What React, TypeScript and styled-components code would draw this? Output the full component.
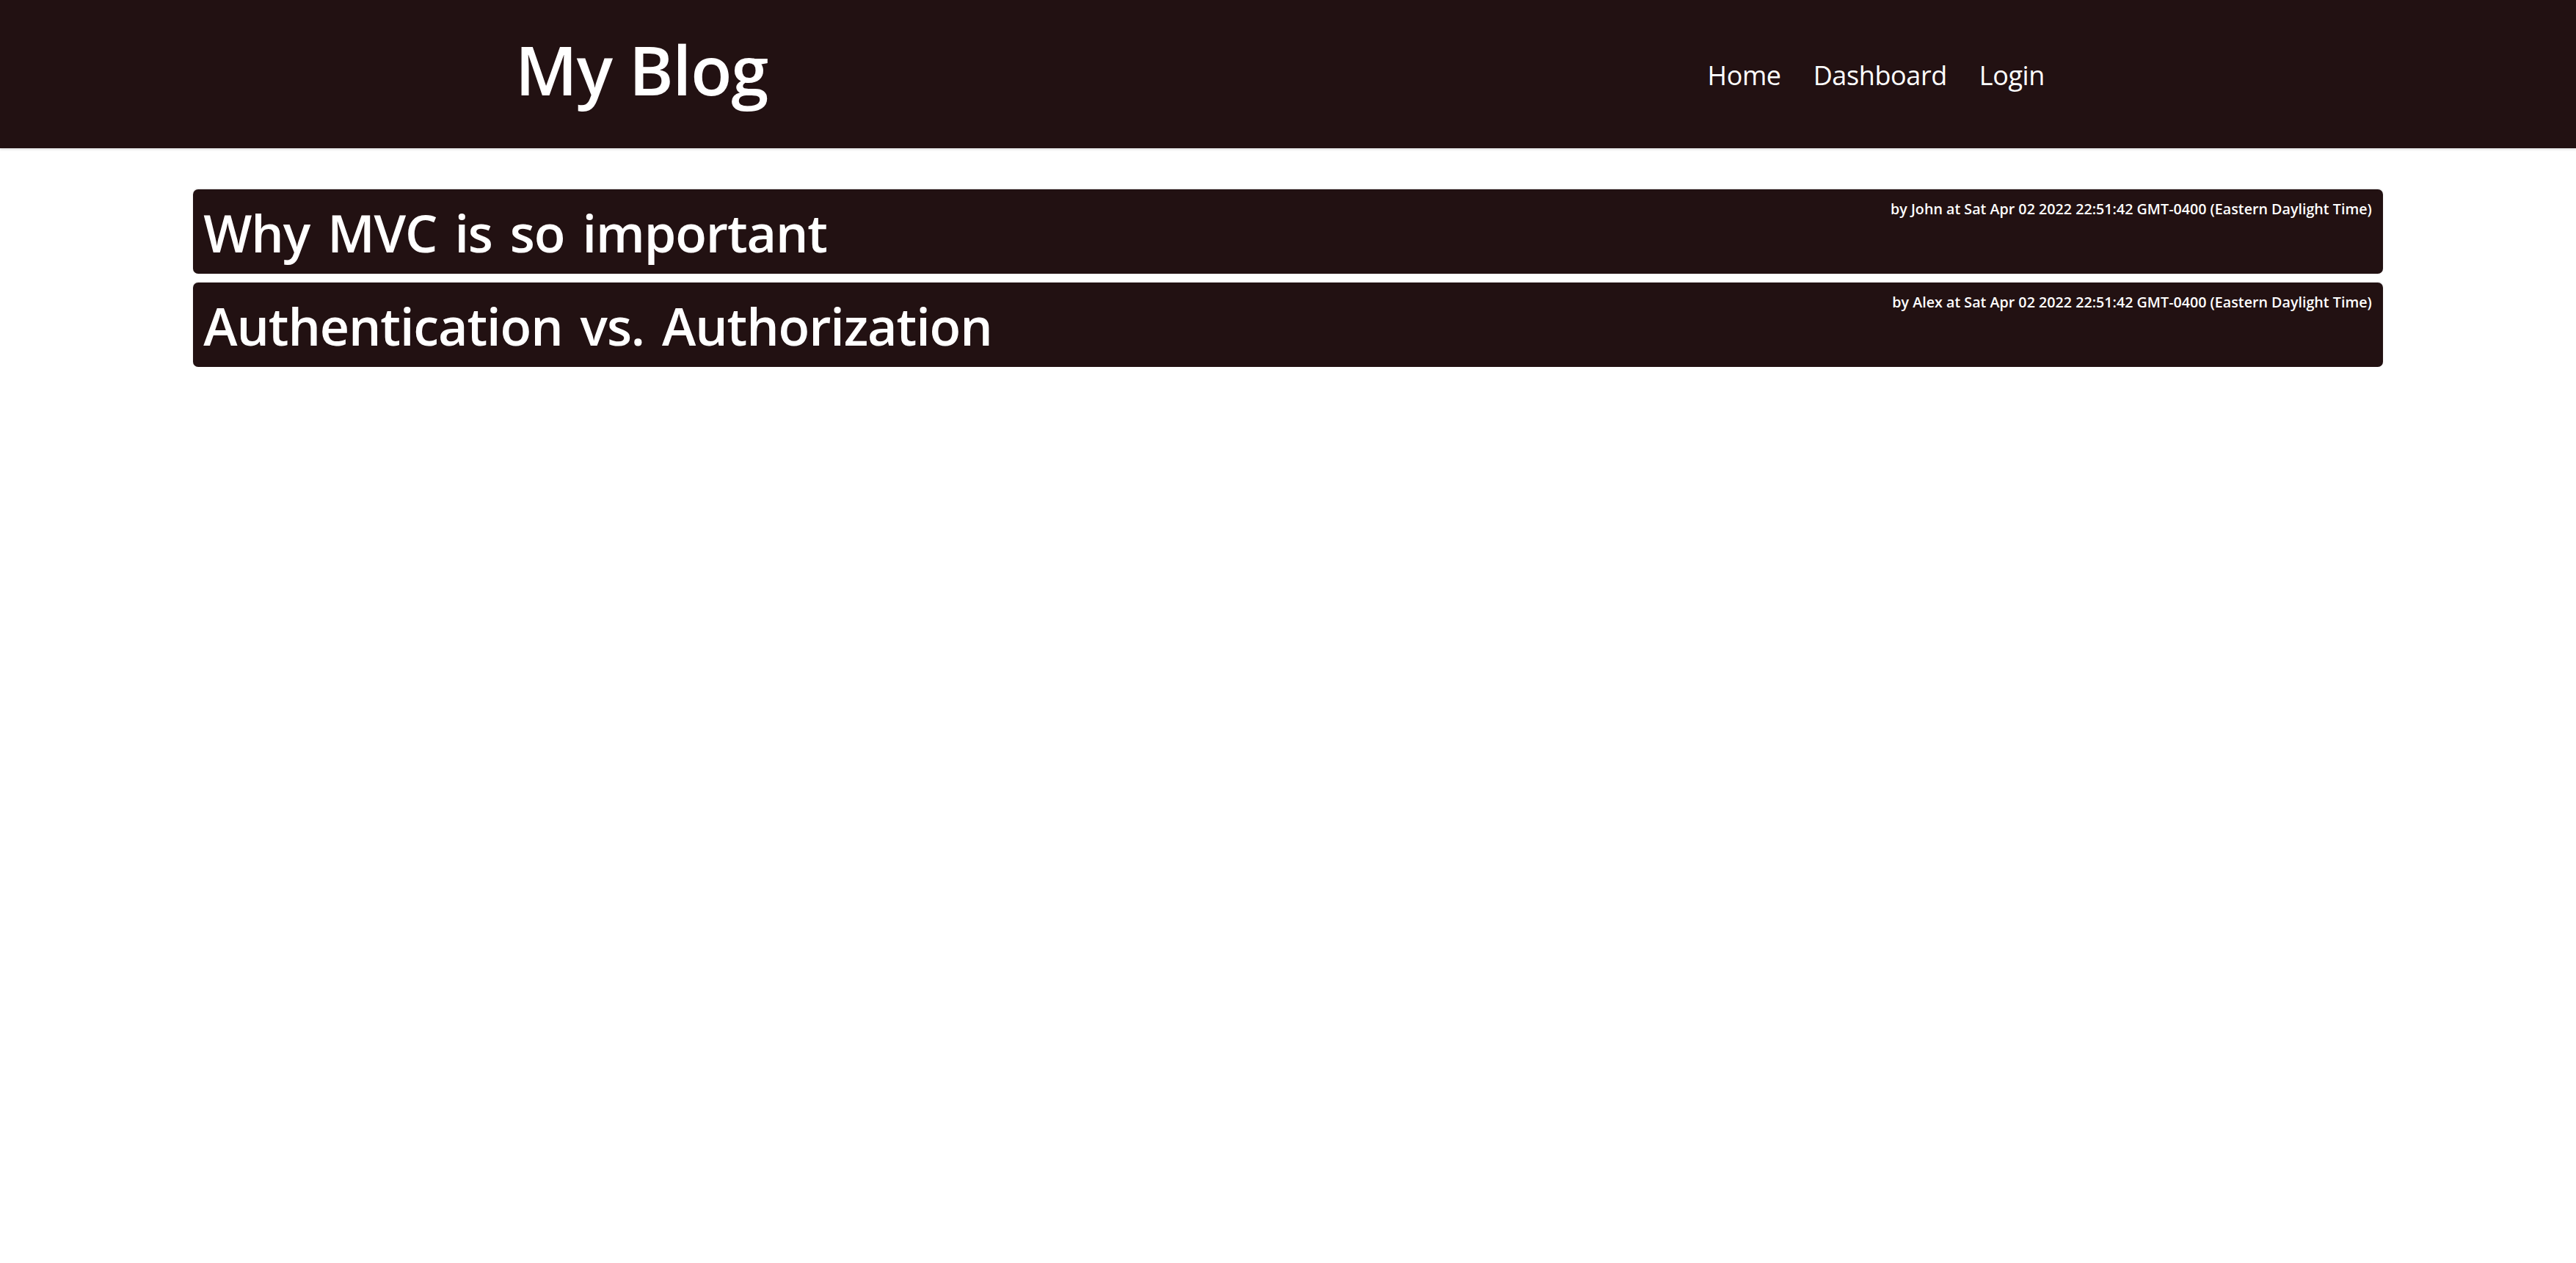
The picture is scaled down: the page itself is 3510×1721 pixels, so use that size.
import React from "react";
import styled, { createGlobalStyle } from "styled-components";

const GlobalStyle = createGlobalStyle`
  html, body {
    margin: 0;
    padding: 0;
    background: #ffffff;
    font-family: "Open Sans", "Noto Sans", "Liberation Sans", sans-serif;
  }
  * { box-sizing: border-box; }
`;

const DARK = "#221112";

const Header = styled.header`
  height: 202px;
  background: ${DARK};
  box-shadow: 0 2px 3px rgba(0, 0, 0, 0.12);
`;

const HeaderInner = styled.div`
  width: 60%;
  height: 100%;
  margin: 0 auto;
  display: flex;
  align-items: center;
  justify-content: space-between;
`;

const Brand = styled.h1`
  margin: 0 0 12px 0;
  font-size: 92px;
  font-weight: 600;
  line-height: 1;
  color: #ffffff;
  letter-spacing: -1px;
`;

const Nav = styled.nav`
  display: flex;
  align-items: center;
  padding-top: 4px;
`;

const NavLink = styled.a`
  padding: 0 22px;
  font-size: 36px;
  line-height: 1;
  color: #ffffff;
  text-decoration: none;
  letter-spacing: -0.4px;
`;

const Main = styled.main`
  width: 85%;
  margin: 56px auto 0;
  display: flex;
  flex-direction: column;
  gap: 12px;
`;

const Card = styled.article`
  height: 115px;
  padding: 17px 15px 0 14px;
  background: ${DARK};
  border-radius: 7px;
  box-shadow: 0 -1px 2px rgba(0, 0, 0, 0.12);
  color: #ffffff;
  display: flex;
  flex-direction: column;
`;

const Meta = styled.p`
  margin: 0;
  align-self: flex-end;
  font-size: 19.7px;
  font-weight: 600;
  line-height: 20px;
  letter-spacing: 0;
`;

const Title = styled.h2`
  margin: 0;
  font-size: 70px;
  font-weight: 600;
  line-height: 44px;
  letter-spacing: -1.1px;
  word-spacing: 7px;
`;

const posts = [
  {
    title: "Why MVC is so important",
    author: "John",
    date: "Sat Apr 02 2022 22:51:42 GMT-0400 (Eastern Daylight Time)",
  },
  {
    title: "Authentication vs. Authorization",
    author: "Alex",
    date: "Sat Apr 02 2022 22:51:42 GMT-0400 (Eastern Daylight Time)",
  },
];

export default function App() {
  return (
    <>
      <GlobalStyle />
      <Header>
        <HeaderInner>
          <Brand>My Blog</Brand>
          <Nav>
            <NavLink href="#">Home</NavLink>
            <NavLink href="#">Dashboard</NavLink>
            <NavLink href="#">Login</NavLink>
          </Nav>
        </HeaderInner>
      </Header>
      <Main>
        {posts.map((p) => (
          <Card key={p.title}>
            <Meta>
              by {p.author} at {p.date}
            </Meta>
            <Title>{p.title}</Title>
          </Card>
        ))}
      </Main>
    </>
  );
}
